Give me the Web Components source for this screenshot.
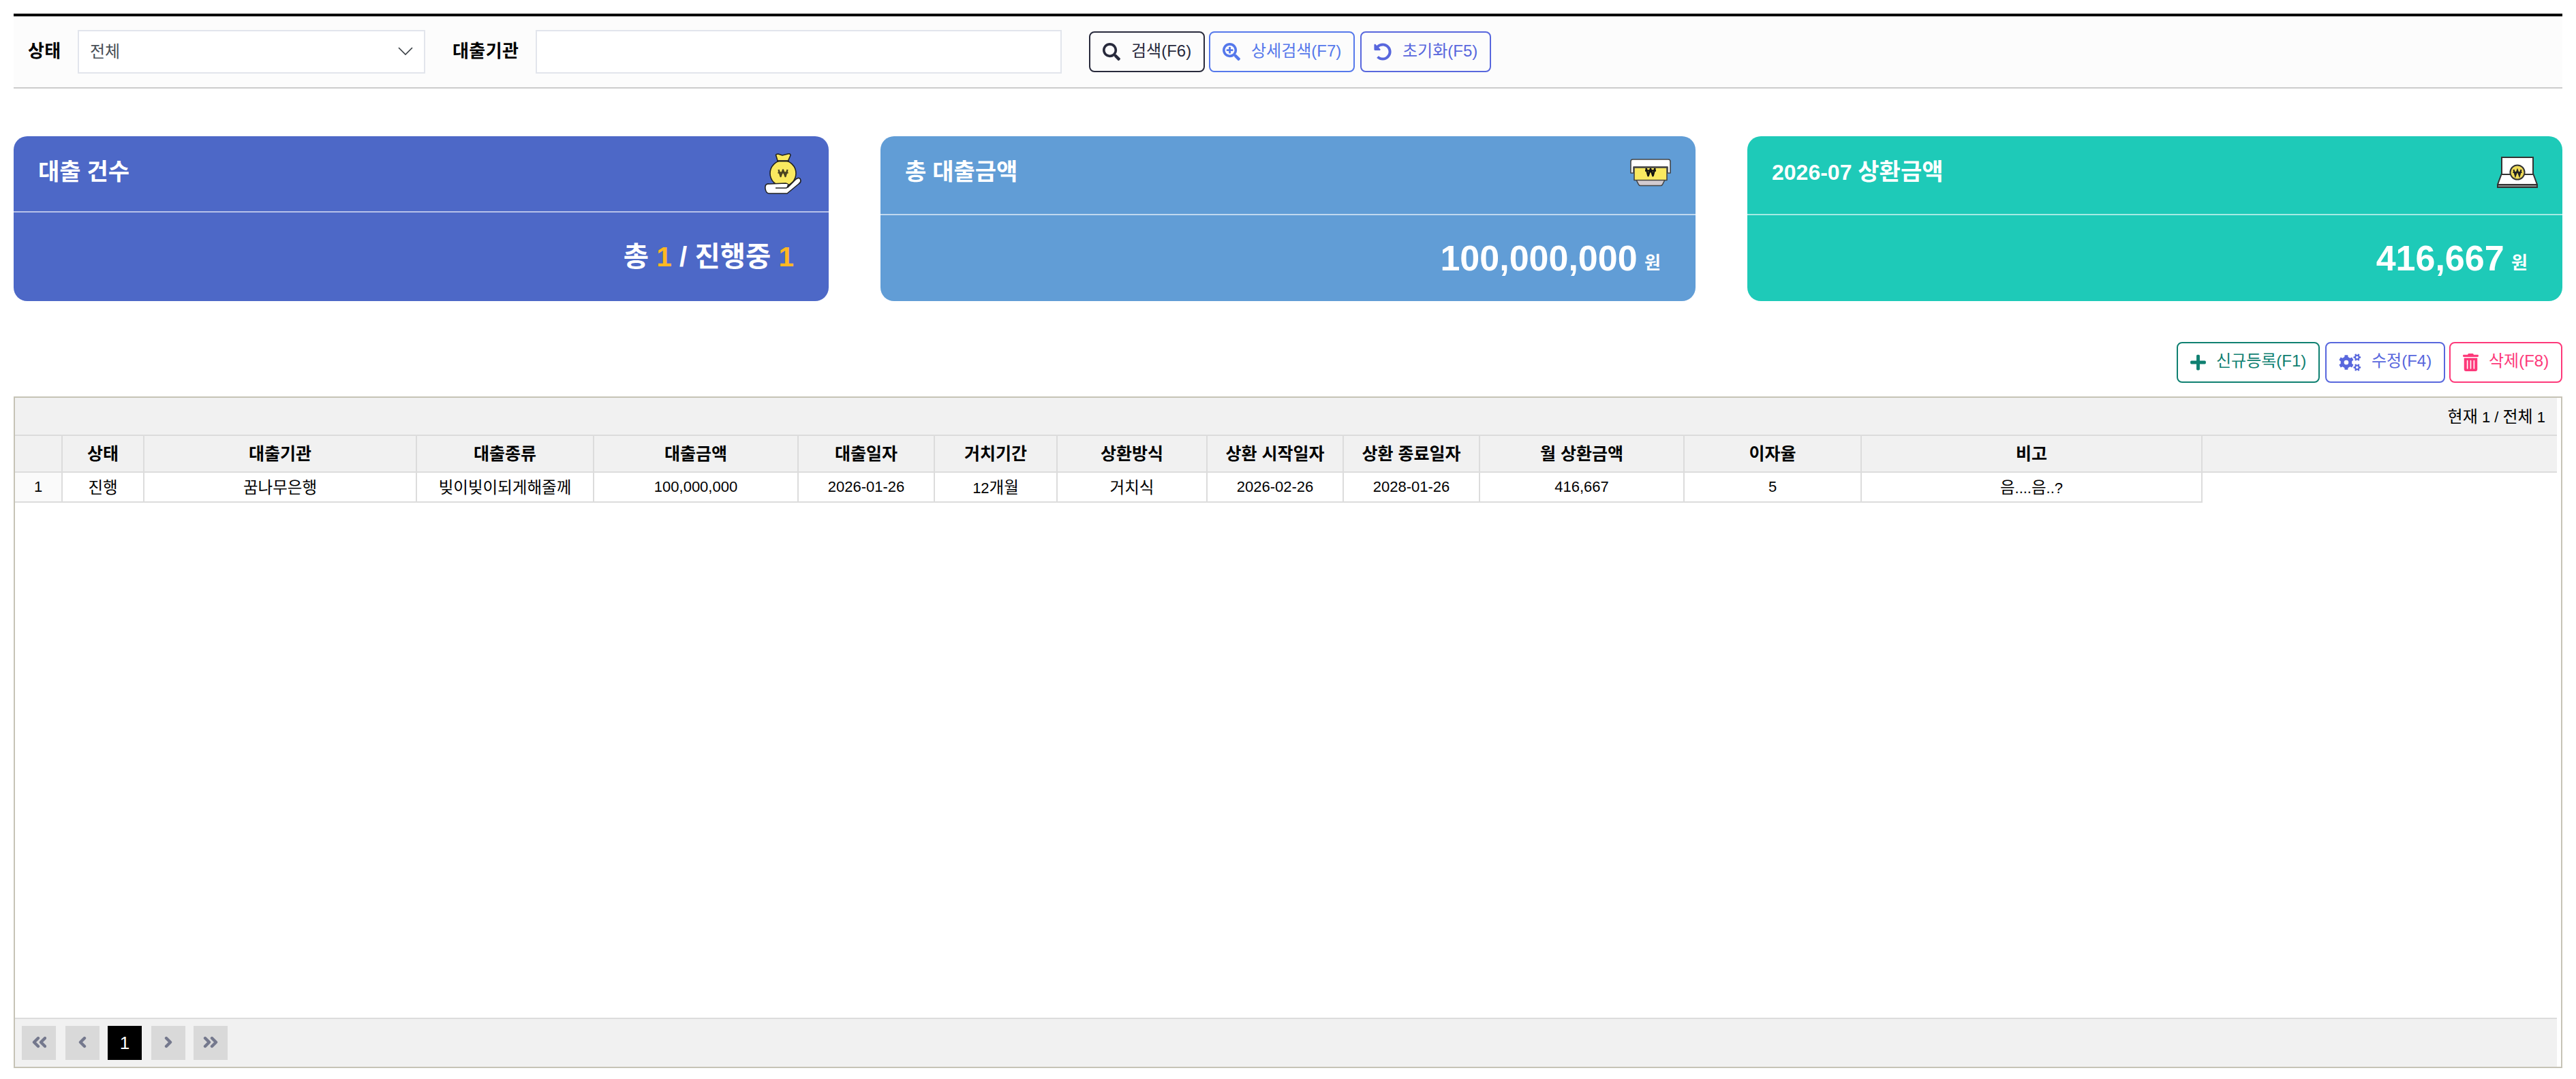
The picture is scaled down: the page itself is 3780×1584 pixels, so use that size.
<!DOCTYPE html>
<html lang="ko">
<head>
<meta charset="utf-8">
<title>대출 관리</title>
<style>
  * { box-sizing: border-box; }
  html, body { margin: 0; background: #fff; }
  body {
    width: 3780px;
    height: 1584px;
    padding: 20px 20px 16px;
    overflow: hidden;
    font-family: "Liberation Sans", "Noto Sans CJK KR", sans-serif;
    color: #000;
  }
</style>
</head>
<body>
<loan-page></loan-page>

<script>
"use strict";

// gear outline: center, outer radius, inner radius, hole radius, teeth
function gear(cx, cy, R, r, hole, teeth, turn = 0) {
  const step = Math.PI * 2 / teeth;
  let d = '';
  for (let i = 0; i < teeth; i++) {
    const a = i * step + turn;
    for (const [k, rad] of [[-.31, r], [-.2, R], [.2, R], [.31, r]]) {
      const x = cx + rad * Math.cos(a + k * step);
      const y = cy + rad * Math.sin(a + k * step);
      d += (d ? 'L' : 'M') + x.toFixed(1) + ' ' + y.toFixed(1);
    }
  }
  return d + `ZM${cx - hole} ${cy}a${hole} ${hole} 0 1 0 ${hole * 2} 0a${hole} ${hole} 0 1 0 ${-hole * 2} 0Z`;
}

// hangul runs are set slightly larger than the latin digits beside them
const ko = (text) => text.replace(/[가-힣]+/g, '<span class="ko">$&</span>');

const ICONS = {
  search: ['0 0 512 512', 26, 'M505 442.7L405.3 343c-4.5-4.5-10.6-7-17-7H372c27.6-35.3 44-79.7 44-128C416 93.1 322.9 0 208 0S0 93.1 0 208s93.1 208 208 208c48.3 0 92.7-16.4 128-44v16.3c0 6.4 2.5 12.5 7 17l99.7 99.7c9.4 9.4 24.6 9.4 33.9 0l28.3-28.3c9.4-9.4 9.4-24.6.1-34zM208 344c-75.2 0-136-60.8-136-136S132.8 72 208 72s136 60.8 136 136-60.8 136-136 136z'],
  searchPlus: ['0 0 512 512', 26, 'M304 192v32c0 6.6-5.4 12-12 12h-56v56c0 6.6-5.4 12-12 12h-32c-6.6 0-12-5.4-12-12v-56h-56c-6.6 0-12-5.4-12-12v-32c0-6.6 5.4-12 12-12h56v-56c0-6.6 5.4-12 12-12h32c6.6 0 12 5.4 12 12v56h56c6.6 0 12 5.4 12 12zm201 284.7L476.7 505c-9.4 9.4-24.6 9.4-33.9 0L343 405.3c-4.5-4.5-7-10.6-7-17V372c-35.3 27.6-79.7 44-128 44C93.1 416 0 322.9 0 208S93.1 0 208 0s208 93.1 208 208c0 48.3-16.4 92.7-44 128h16.3c6.4 0 12.5 2.5 17 7l99.7 99.7c9.3 9.4 9.3 24.6 0 34zM344 208c0-75.2-60.8-136-136-136S72 132.8 72 208s60.8 136 136 136 136-60.8 136-136z'],
  undo: ['0 0 512 512', 26, 'M255.545 8c-66.269.119-126.438 26.233-170.86 68.685L48.971 40.971C33.851 25.851 8 36.559 8 57.941V192c0 13.255 10.745 24 24 24h134.059c21.382 0 32.09-25.851 16.971-40.971l-41.75-41.75c30.864-28.899 70.801-44.907 113.23-45.273 92.398-.798 170.283 73.977 169.484 169.442C423.236 348.009 349.816 424 256 424c-41.127 0-79.997-14.678-110.63-41.556-4.743-4.161-11.906-3.908-16.368.553L89.34 422.659c-4.872 4.872-4.631 12.815.482 17.433C133.798 479.813 192.074 504 256 504c136.966 0 247.999-111.033 248-247.998C504.001 119.193 392.354 7.755 255.545 8z'],
  plus: ['0 0 448 512', 23, 'M416 208H272V64c0-17.67-14.33-32-32-32h-32c-17.67 0-32 14.33-32 32v144H32c-17.67 0-32 14.33-32 32v32c0 17.67 14.33 32 32 32h144v144c0 17.67 14.33 32 32 32h32c17.67 0 32-14.33 32-32V304h144c17.67 0 32-14.33 32-32v-32c0-17.67-14.33-32-32-32z'],
  cogs: ['0 0 640 512', 33, gear(210, 256, 218, 165, 66, 6, Math.PI / 6 * 3) + gear(523, 110, 108, 78, 36, 6) + gear(523, 402, 108, 78, 36, 6)],
  trash: ['0 0 448 512', 23, 'M32 464a48 48 0 0 0 48 48h288a48 48 0 0 0 48-48V128H32zm272-256a16 16 0 0 1 32 0v224a16 16 0 0 1-32 0zm-96 0a16 16 0 0 1 32 0v224a16 16 0 0 1-32 0zm-96 0a16 16 0 0 1 32 0v224a16 16 0 0 1-32 0zM432 32H312l-9.4-18.7A24 24 0 0 0 281.1 0H166.8a23.72 23.72 0 0 0-21.4 13.3L136 32H16A16 16 0 0 0 0 48v32a16 16 0 0 0 16 16h416a16 16 0 0 0 16-16V48a16 16 0 0 0-16-16z']
};

// small drawings in the card headers
const PICTURES = {
  bag: `<svg width="54" height="60" viewBox="0 0 54 60" stroke="#222" stroke-width="1.6" stroke-linejoin="round">
    <circle cx="27" cy="29.5" r="19" fill="#f9e960"/>
    <path d="M19 11L16.500 2.500Q17 1 20 1L26 3L34 1Q38 0 38 3L34.500 11Z" fill="#f9e960"/>
    <path d="M18 11.500H36" stroke-width="2"/>
    <path d="M20.500 24L23.500 34L27 24.500L30.500 34L33.500 24M19.500 28.500H34.500" fill="none" stroke="#4a4320" stroke-width="2.400"/>
    <path d="M1 52Q0 44 7 45L31 44Q37 45 34 50L46 38Q52 34 53 40Q53 43 50 45L33 59H7Q2 59 1 52Z" fill="#fff"/>
    <path d="M16 51H31Q34 51 34 47" fill="none"/></svg>`,
  cash: `<svg width="60" height="41" viewBox="0 0 60 41" stroke="#444" stroke-width="1.6" stroke-linejoin="round">
    <path d="M9 31H51L48 37Q47 39.500 45 39.500H15Q13 39.500 12 37Z" fill="#d2cbd0"/>
    <path d="M1 4Q1 1 4 1H56Q59 1 59 4V21H55V12H5V21H1Z" fill="#fff"/>
    <rect x="6" y="13" width="48" height="18.500" fill="#f9e960"/>
    <path d="M5 12.500H55"/>
    <path d="M23.500 14L26.500 25L30 15L33.500 25L36.500 14M22 17.500H38" fill="none" stroke="#111" stroke-width="2.700"/></svg>`,
  laptop: `<svg width="60" height="46" viewBox="0 0 60 46" stroke="#333" stroke-width="2">
    <rect x="7" y="1" width="46" height="26" fill="#fff"/>
    <path d="M6.500 26H53.500L59 41H1Z" fill="#fff"/>
    <path d="M1 41H59V45H1Z" fill="#888"/>
    <circle cx="30" cy="23" r="10.500" fill="#f0dc58"/>
    <path d="M24.500 19L27 28L30 20L33 28L35.500 19M23.500 23H36.500" fill="none" stroke="#222" stroke-width="2.200"/></svg>`
};

class BaseElement extends HTMLElement {
  constructor() {
    super();
    this.attachShadow({ mode: 'open' });
  }
  connectedCallback() {
    const template = document.createElement('template');
    template.innerHTML = `<style>*{box-sizing:border-box}:host{box-sizing:border-box}${this.css()}</style>${this.html()}`;
    this.shadowRoot.appendChild(template.content.cloneNode(true));
  }
}

class IconButton extends BaseElement {
  css() {
    return `
      :host { display: flex; width: var(--w); height: 60px; padding-left: 18px;
        align-items: center; border: 2px solid; border-radius: 8px; }
      svg { flex: none; margin-right: var(--gap, 16px); fill: currentColor; fill-rule: evenodd; }
      span { font-size: 24px; line-height: 36px; white-space: nowrap;
        margin-top: var(--rise, -2px); }`;
  }
  html() {
    const [box, w, d] = ICONS[this.getAttribute('icon')];
    return `<svg width="${w}" height="26" viewBox="${box}"><path d="${d}"/></svg><span><slot></slot></span>`;
  }
}

class SearchBar extends BaseElement {
  css() {
    return `
      :host { display: flex; align-items: center; height: 110px; padding: 0 20px;
        background: #fcfcfc; border-top: 4px solid #000; border-bottom: 2px solid #ccc; }
      label { padding-bottom: 2px; font-size: 26px; font-weight: bold; line-height: 36px;
        letter-spacing: .4px; white-space: nowrap; }
      .state { width: 74px; padding-left: 1px; }
      .org { width: 122px; margin-left: 40px; }
      .select, .input { height: 64px; border: 2px solid #e2e5ec; background: #fff; }
      .select { display: flex; width: 510px; align-items: center; justify-content: space-between;
        padding: 0 16px; font-size: 24px; color: #495057; }
      .select span { padding-bottom: 5px; }
      .select svg { margin-bottom: 2px; }
      .input { width: 772px; }
      .buttons { display: flex; margin-left: 40px; }
      .buttons icon-button + icon-button { margin-left: 6px; }
      .buttons icon-button:last-child { margin-left: 8px; }`;
  }
  html() {
    return `
      <label class="state">상태</label>
      <div class="select"><span>전체</span>
        <svg width="22" height="12" viewBox="0 0 22 12" fill="none" stroke="#343a40" stroke-width="1.6"><path d="M1 1L11 11L21 1"/></svg>
      </div>
      <label class="org">대출기관</label>
      <div class="input"></div>
      <div class="buttons">
        <icon-button icon="search" style="--w:170px;color:#282a3c">검색(F6)</icon-button>
        <icon-button icon="searchPlus" style="--w:214px;color:#5578eb">상세검색(F7)</icon-button>
        <icon-button icon="undo" style="--w:192px;color:#5867dd">초기화(F5)</icon-button>
      </div>`;
  }
}

class SummaryCard extends BaseElement {
  css() {
    return `
      :host { display: flex; flex-direction: column; flex: 1; height: 242px;
        border-radius: 20px; background: var(--bg); color: #fff; font-weight: bold; }
      header { display: flex; justify-content: space-between; align-items: center; height: var(--head, 116px);
        padding: 0 36px 10px; border-bottom: 2px solid rgba(255,255,255,.6); }
      h3 { margin: var(--title-drop, 0) 0 0; font-size: 32px; line-height: 44px; }
      .ko { font-size: 34px; }
      svg { display: block; margin: var(--drop, 2px) var(--nudge, 0) 0 0; }
      .value { display: flex; flex: 1; justify-content: flex-end; align-items: center;
        padding: var(--value-drop, 6px) 51px 0 0; }
      .value div { white-space: pre; font-size: var(--size, 52px); line-height: 64px; }`;
  }
  html() {
    return `
      <header><h3>${ko(this.getAttribute('heading'))}</h3>${PICTURES[this.getAttribute('picture')]}</header>
      <div class="value"><div><slot></slot></div></div>`;
  }
}

const COLUMNS = [
  ['', 70, '1'],
  ['상태', 120, '진행'],
  ['대출기관', 400, '꿈나무은행'],
  ['대출종류', 260, '빚이빚이되게해줄께'],
  ['대출금액', 300, '100,000,000'],
  ['대출일자', 200, '2026-01-26'],
  ['거치기간', 180, '12개월'],
  ['상환방식', 220, '거치식'],
  ['상환 시작일자', 200, '2026-02-26'],
  ['상환 종료일자', 200, '2028-01-26'],
  ['월 상환금액', 300, '416,667'],
  ['이자율', 260, '5'],
  ['비고', 500, '음....음..?']
];

class PageButton extends BaseElement {
  css() {
    return `
      :host { display: flex; width: 50px; height: 50px; align-items: center; justify-content: center;
        background: #d9d9d9; color: #74788d; font-size: 26px; }
      :host([active]) { background: #000; color: #fff; }
      svg { margin-right: 1px; margin-bottom: 2px; }`;
  }
  html() {
    const shapes = {
      first: [22, 'M10 3L4 9L10 15M20 3L14 9L20 15'],
      prev: [14, 'M10 3L4 9L10 15'],
      next: [14, 'M4 3L10 9L4 15'],
      last: [22, 'M3 3L9 9L3 15M13 3L19 9L13 15']
    };
    const shape = shapes[this.getAttribute('to')];
    if (!shape) return '<slot></slot>';
    return `<svg width="${shape[0]}" height="18" viewBox="0 0 ${shape[0]} 18" fill="none" stroke="currentColor" stroke-width="4.4" stroke-linecap="round" stroke-linejoin="round"><path d="${shape[1]}"/></svg>`;
  }
}

class LoanGrid extends BaseElement {
  css() {
    return `
      :host { display: flex; flex-direction: column; height: 986px; padding-right: 6px;
        border: 2px solid #c6c3b6; background: #fff; }
      .count { display: flex; height: 56px; align-items: center; justify-content: flex-end;
        padding: 0 17px 3px 0; background: #f1f1f1; border-bottom: 2px solid #dcdcdc; font-size: 22px; }
      .count .ko { font-size: 24px; }
      .row { display: flex; height: 44px; font-size: 22px; }
      .row.head { height: 54px; background: #f1f1f1; border-bottom: 2px solid #dcdcdc;
        font-size: 25px; font-weight: bold; }
      .cell { display: flex; flex: none; align-items: center; justify-content: center;
        border-right: 2px solid #dcdcdc; white-space: nowrap; }
      .head .cell { padding-bottom: 4px; }
      .body .cell { border-bottom: 2px solid #dcdcdc; }
      .body .ko { font-size: 23.5px; }
      .body .cell:has(.ko) { padding-bottom: 2px; }
      .body .cell:first-child { background: #fafafa; }
      .space { flex: 1; }
      footer { display: flex; height: 72px; align-items: center; padding-left: 10px;
        background: #f1f1f1; border-top: 2px solid #dcdcdc; }
      page-button { margin-right: 12px; }
      page-button[to=first], page-button[active] { margin-right: 14px; }`;
  }
  html() {
    const cells = (n) => COLUMNS.map(c =>
      `<div class="cell" style="width:${c[1]}px"><div>${n ? ko(c[n]) : c[n]}</div></div>`).join('');
    return `
      <div class="count"><div>${ko('현재 1 / 전체 1')}</div></div>
      <div class="row head">${cells(0)}</div>
      <div class="row body">${cells(2)}</div>
      <div class="space"></div>
      <footer>
        <page-button to="first"></page-button>
        <page-button to="prev"></page-button>
        <page-button active>1</page-button>
        <page-button to="next"></page-button>
        <page-button to="last"></page-button>
      </footer>`;
  }
}

class LoanPage extends BaseElement {
  css() {
    return `
      :host { display: block; }
      .cards { display: flex; gap: 76px; margin-top: 70px; }
      .actions { display: flex; justify-content: flex-end; margin: 60px 0 20px; }
      .actions icon-button + icon-button { margin-left: 8px; }
      .actions icon-button:last-child { margin-left: 6px; }
      .won { margin-left: -4px; font-size: 26px; vertical-align: 2px; }
      .num { color: #ffb822; }`;
  }
  html() {
    return `
      <search-bar></search-bar>
      <div class="cards">
        <summary-card heading="대출 건수" picture="bag" style="--bg:#4d68c7;--head:112px;--size:40.500px;--drop:10px;--nudge:4px;--title-drop:4px;--value-drop:0">총 <span class="num">1</span> / 진행중 <span class="num">1</span></summary-card>
        <summary-card heading="총 대출금액" picture="cash" style="--bg:#619dd6">100,000,000 <span class="won">원</span></summary-card>
        <summary-card heading="2026-07 상환금액" picture="laptop" style="--bg:#1ecab8">416,667 <span class="won">원</span></summary-card>
      </div>
      <div class="actions">
        <icon-button icon="plus" style="--w:210px;--rise:-5px;--gap:15px;color:#0f8071">신규등록(F1)</icon-button>
        <icon-button icon="cogs" style="--w:176px;--rise:-5px;--gap:15px;color:#5867dd">수정(F4)</icon-button>
        <icon-button icon="trash" style="--w:166px;--rise:-5px;--gap:15px;color:#fd397a">삭제(F8)</icon-button>
      </div>
      <loan-grid></loan-grid>`;
  }
}

customElements.define('icon-button', IconButton);
customElements.define('search-bar', SearchBar);
customElements.define('summary-card', SummaryCard);
customElements.define('page-button', PageButton);
customElements.define('loan-grid', LoanGrid);
customElements.define('loan-page', LoanPage);
</script>
</body>
</html>
